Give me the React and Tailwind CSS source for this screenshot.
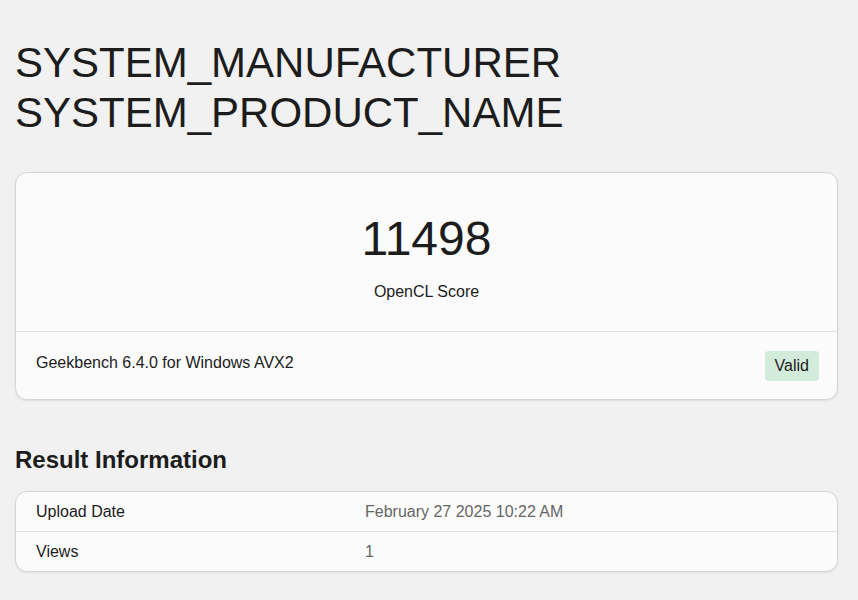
export default function App() {
    return (
        <div className="min-h-screen bg-[#f1f1f1] font-['Liberation_Sans',Arial,sans-serif] text-[#1c1c1c] pl-[15px] pr-[20px] pt-[38px] pb-10">
            <h1 className="text-[42px] leading-[50px] font-normal">
                SYSTEM_MANUFACTURER
                <br />
                SYSTEM_PRODUCT_NAME
            </h1>

            {/* Score card */}
            <div className="mt-[34px] bg-[#fbfbfb] border border-[#d5d5d5] rounded-[12px] shadow-[0_1px_2px_rgba(0,0,0,0.08)]">
                <div className="flex flex-col items-center pt-[37px] pb-[27px] border-b border-[#dedede]">
                    <div className="text-[48px] leading-[58px]">11498</div>
                    <div className="mt-[12px] text-[16px] leading-6">OpenCL Score</div>
                </div>
                <div className="flex items-start justify-between pl-5 pr-[18px] pt-[19px] pb-[18px]">
                    <div className="text-[16px] leading-6">Geekbench 6.4.0 for Windows AVX2</div>
                    <span className="px-[10px] py-[3px] text-[16px] leading-6 bg-[#d3ebda] rounded-[4px]">Valid</span>
                </div>
            </div>

            <h2 className="mt-[45px] text-[24px] leading-[29px] font-bold">Result Information</h2>

            <div className="mt-[17px] bg-[#fbfbfb] border border-[#d5d5d5] rounded-[12px] shadow-[0_1px_2px_rgba(0,0,0,0.08)] text-[16px]">
                <div className="flex items-center h-[40px] px-5 border-b border-[#e2e2e2]">
                    <div className="w-[329px]">Upload Date</div>
                    <div className="text-[#666666]">February 27 2025 10:22 AM</div>
                </div>
                <div className="flex items-center h-[39px] px-5">
                    <div className="w-[329px]">Views</div>
                    <div className="text-[#666666]">1</div>
                </div>
            </div>
        </div>
    );
}
